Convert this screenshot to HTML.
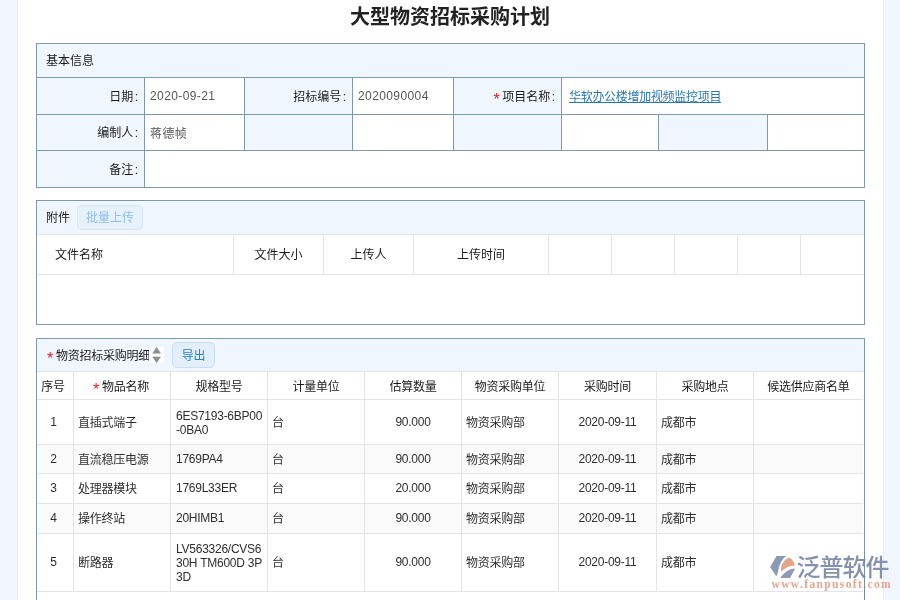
<!DOCTYPE html>
<html lang="zh-CN">
<head>
<meta charset="utf-8">
<title>大型物资招标采购计划</title>
<style>
*{box-sizing:border-box;margin:0;padding:0}
html,body{width:900px;height:600px;overflow:hidden;background:#fff}
body{position:relative;font-family:"Liberation Sans","Noto Sans CJK SC",sans-serif;font-size:12px;color:#2e2e2e;line-height:1}
.p3{letter-spacing:-0.25px}
.p3 .star{margin-right:0}
#root{position:absolute;left:0;top:0;width:900px;height:600px;overflow:hidden;will-change:transform}
.abs{position:absolute}
.side{position:absolute;top:0;height:600px;background:#f1f5fd}
.title{position:absolute;left:0;top:5px;width:900px;height:24px;line-height:24px;text-align:center;font-size:20px;font-weight:bold;color:#222}
.panel{position:absolute;left:36px;width:829px;border:1px solid #7e99a7;background:#fff}
.phead{position:absolute;left:0;top:0;width:827px;background:#f0f6fd}
.hl{position:absolute;background:#7e99a7;height:1px}
.vl{position:absolute;background:#7e99a7;width:1px}
.gl{position:absolute;background:#e4e4e4;height:1px}
.gv{position:absolute;background:#e4e4e4;width:1px}
.lab{position:absolute;background:#f0f6fd}
.t{position:absolute;white-space:nowrap}
.r{text-align:right;letter-spacing:0}
.c{text-align:center}
.cl{margin-left:1.5px}
.d{color:#1a1a1a}
.g{color:#555}
.star{color:#e02020;font-weight:400;font-size:16px;line-height:0;position:relative;top:4px;margin-right:-1px;font-family:"Liberation Sans",sans-serif}
.btn{position:absolute;border:1px solid #d7e7f6;background:#e7f1fc;border-radius:4px;text-align:center;white-space:nowrap}
.lnk{color:#2878b0;text-decoration:underline;letter-spacing:-0.3px}
</style>
</head>
<body>
<div id="root">
<div class="side" style="left:0;width:18px;border-right:1px solid #e9edf5"></div>
<div class="side" style="left:883px;width:17px;border-left:1px solid #e9edf5"></div>
<div class="title">大型物资招标采购计划</div>
<div class="panel" style="top:43px;height:145px">
  <div class="phead" style="height:33px"></div>
  <div class="t d" style="left:9px;top:1px;height:33px;line-height:33px">基本信息</div>
  <div class="lab" style="left:0px;top:34px;width:107px;height:36px"></div>
  <div class="lab" style="left:208px;top:34px;width:107px;height:36px"></div>
  <div class="lab" style="left:417px;top:34px;width:107px;height:36px"></div>
  <div class="lab" style="left:0px;top:71px;width:107px;height:35px"></div>
  <div class="lab" style="left:208px;top:71px;width:107px;height:35px"></div>
  <div class="lab" style="left:417px;top:71px;width:107px;height:35px"></div>
  <div class="lab" style="left:622px;top:71px;width:108px;height:35px"></div>
  <div class="lab" style="left:0px;top:107px;width:107px;height:36px"></div>
  <div class="t r d" style="left:0px;top:35px;height:36px;line-height:36px;width:101px">日期<span class="cl">:</span></div>
  <div class="t r d" style="left:208px;top:35px;height:36px;line-height:36px;width:101px">招标编号<span class="cl">:</span></div>
  <div class="t r d" style="left:417px;top:35px;height:36px;line-height:36px;width:101px"><span class="star">*</span> 项目名称<span class="cl">:</span></div>
  <div class="t r d" style="left:0px;top:72px;height:35px;line-height:35px;width:101px">编制人<span class="cl">:</span></div>
  <div class="t r d" style="left:0px;top:108px;height:36px;line-height:36px;width:101px">备注<span class="cl">:</span></div>
  <div class="t g" style="left:113px;top:34px;height:36px;line-height:36px;letter-spacing:.4px">2020-09-21</div>
  <div class="t g" style="left:321px;top:34px;height:36px;line-height:36px;letter-spacing:.4px">2020090004</div>
  <div class="t " style="left:532px;top:35px;height:36px;line-height:36px"><span class="lnk">华软办公楼增加视频监控项目</span></div>
  <div class="t g" style="left:113px;top:73px;height:35px;line-height:35px;letter-spacing:.4px">蒋德帧</div>
  <div class="hl" style="left:0;top:33px;width:827px"></div>
  <div class="hl" style="left:0;top:70px;width:827px"></div>
  <div class="hl" style="left:0;top:106px;width:827px"></div>
  <div class="vl" style="left:107px;top:34px;height:109px"></div>
  <div class="vl" style="left:207px;top:34px;height:72px"></div>
  <div class="vl" style="left:315px;top:34px;height:72px"></div>
  <div class="vl" style="left:416px;top:34px;height:72px"></div>
  <div class="vl" style="left:524px;top:34px;height:72px"></div>
  <div class="vl" style="left:621px;top:71px;height:35px"></div>
  <div class="vl" style="left:730px;top:71px;height:35px"></div>
</div>
<div class="panel" style="top:200px;height:125px">
  <div class="phead" style="height:33px"></div>
  <div class="t d" style="left:9px;top:1px;height:33px;line-height:33px">附件</div>
  <div class="btn" style="left:40px;top:4px;width:66px;height:25px;line-height:24px;color:#8fc0e3">批量上传</div>
  <div class="gl" style="left:0;top:33px;width:827px"></div>
  <div class="gl" style="left:0;top:73px;width:827px"></div>
  <div class="gv" style="left:196px;top:34px;height:39px"></div>
  <div class="gv" style="left:286px;top:34px;height:39px"></div>
  <div class="gv" style="left:376px;top:34px;height:39px"></div>
  <div class="gv" style="left:511px;top:34px;height:39px"></div>
  <div class="gv" style="left:574px;top:34px;height:39px"></div>
  <div class="gv" style="left:637px;top:34px;height:39px"></div>
  <div class="gv" style="left:700px;top:34px;height:39px"></div>
  <div class="gv" style="left:763px;top:34px;height:39px"></div>
  <div class="t d" style="left:18px;top:35px;height:39px;line-height:39px">文件名称</div>
  <div class="t c d" style="left:197px;top:35px;height:39px;line-height:39px;width:89px">文件大小</div>
  <div class="t c d" style="left:287px;top:35px;height:39px;line-height:39px;width:89px">上传人</div>
  <div class="t c d" style="left:377px;top:35px;height:39px;line-height:39px;width:134px">上传时间</div>
</div>
<div class="panel p3" style="top:338px;height:300px">
  <div class="phead" style="height:32px"></div>
  <div class="t d" style="left:10px;top:1px;height:32px;line-height:32px"><span class="star">*</span> 物资招标采购明细</div>
  <div class="abs" style="left:112px;top:8px;width:15px;height:16px;background:#fbfcfe"></div>
  <svg class="abs" style="left:112px;top:8px" width="14" height="16" viewBox="0 0 14 16"><path d="M7.6 0.3 L11.4 6.2 H3.8 Z" fill="#8e8e8e" stroke="#8e8e8e" stroke-width="0.6" stroke-linejoin="round"/><path d="M7.6 15.7 L11.4 10 H3.8 Z" fill="#8e8e8e" stroke="#8e8e8e" stroke-width="0.6" stroke-linejoin="round"/></svg>
  <div class="btn" style="left:135px;top:3px;width:43px;height:26px;line-height:26px;color:#2585c6;border-color:#c8def1;background:#e2eefa;border-radius:5px">导出</div>
  <div class="abs" style="left:0;top:106px;width:826px;height:28px;background:#fafafa"></div>
  <div class="abs" style="left:0;top:165px;width:826px;height:29px;background:#fafafa"></div>
  <div class="gl" style="left:0;top:32px;width:827px"></div>
  <div class="gl" style="left:0;top:60px;width:826px"></div>
  <div class="gl" style="left:0;top:105px;width:826px"></div>
  <div class="gl" style="left:0;top:134px;width:826px"></div>
  <div class="gl" style="left:0;top:164px;width:826px"></div>
  <div class="gl" style="left:0;top:194px;width:826px"></div>
  <div class="gl" style="left:0;top:252px;width:826px"></div>
  <div class="gv" style="left:36px;top:33px;height:219px"></div>
  <div class="gv" style="left:133px;top:33px;height:219px"></div>
  <div class="gv" style="left:230px;top:33px;height:219px"></div>
  <div class="gv" style="left:327px;top:33px;height:219px"></div>
  <div class="gv" style="left:424px;top:33px;height:219px"></div>
  <div class="gv" style="left:521px;top:33px;height:219px"></div>
  <div class="gv" style="left:619px;top:33px;height:219px"></div>
  <div class="gv" style="left:716px;top:33px;height:219px"></div>
  <div class="t c d" style="left:-2px;top:35px;height:27px;line-height:27px;width:36px">序号</div>
  <div class="t c d" style="left:36px;top:35px;height:27px;line-height:27px;width:96px"><span class="star">*</span> 物品名称</div>
  <div class="t c d" style="left:134px;top:35px;height:27px;line-height:27px;width:96px">规格型号</div>
  <div class="t c d" style="left:231px;top:35px;height:27px;line-height:27px;width:96px">计量单位</div>
  <div class="t c d" style="left:328px;top:35px;height:27px;line-height:27px;width:96px">估算数量</div>
  <div class="t c d" style="left:425px;top:35px;height:27px;line-height:27px;width:96px">物资采购单位</div>
  <div class="t c d" style="left:522px;top:35px;height:27px;line-height:27px;width:97px">采购时间</div>
  <div class="t c d" style="left:620px;top:35px;height:27px;line-height:27px;width:96px">采购地点</div>
  <div class="t c d" style="left:717px;top:35px;height:27px;line-height:27px;width:109px">候选供应商名单</div>
  <div class="t c" style="left:-1px;top:61px;height:44px;line-height:44px;width:35px">1</div>
  <div class="t " style="left:41px;top:62px;height:44px;line-height:44px">直插式端子</div>
  <div class="t" style="left:139px;top:69.5px;line-height:14px">6ES7193-6BP00<br>-0BA0</div>
  <div class="t " style="left:235px;top:62px;height:44px;line-height:44px">台</div>
  <div class="t c" style="left:328px;top:61px;height:44px;line-height:44px;width:96px">90.000</div>
  <div class="t " style="left:429px;top:62px;height:44px;line-height:44px">物资采购部</div>
  <div class="t c" style="left:522px;top:61px;height:44px;line-height:44px;width:97px">2020-09-11</div>
  <div class="t " style="left:624px;top:62px;height:44px;line-height:44px">成都市</div>
  <div class="t c" style="left:-1px;top:106px;height:28px;line-height:28px;width:35px">2</div>
  <div class="t " style="left:41px;top:107px;height:28px;line-height:28px">直流稳压电源</div>
  <div class="t " style="left:139px;top:106px;height:28px;line-height:28px">1769PA4</div>
  <div class="t " style="left:235px;top:107px;height:28px;line-height:28px">台</div>
  <div class="t c" style="left:328px;top:106px;height:28px;line-height:28px;width:96px">90.000</div>
  <div class="t " style="left:429px;top:107px;height:28px;line-height:28px">物资采购部</div>
  <div class="t c" style="left:522px;top:106px;height:28px;line-height:28px;width:97px">2020-09-11</div>
  <div class="t " style="left:624px;top:107px;height:28px;line-height:28px">成都市</div>
  <div class="t c" style="left:-1px;top:135px;height:29px;line-height:29px;width:35px">3</div>
  <div class="t " style="left:41px;top:136px;height:29px;line-height:29px">处理器模块</div>
  <div class="t " style="left:139px;top:135px;height:29px;line-height:29px">1769L33ER</div>
  <div class="t " style="left:235px;top:136px;height:29px;line-height:29px">台</div>
  <div class="t c" style="left:328px;top:135px;height:29px;line-height:29px;width:96px">20.000</div>
  <div class="t " style="left:429px;top:136px;height:29px;line-height:29px">物资采购部</div>
  <div class="t c" style="left:522px;top:135px;height:29px;line-height:29px;width:97px">2020-09-11</div>
  <div class="t " style="left:624px;top:136px;height:29px;line-height:29px">成都市</div>
  <div class="t c" style="left:-1px;top:165px;height:29px;line-height:29px;width:35px">4</div>
  <div class="t " style="left:41px;top:166px;height:29px;line-height:29px">操作终站</div>
  <div class="t " style="left:139px;top:165px;height:29px;line-height:29px">20HIMB1</div>
  <div class="t " style="left:235px;top:166px;height:29px;line-height:29px">台</div>
  <div class="t c" style="left:328px;top:165px;height:29px;line-height:29px;width:96px">90.000</div>
  <div class="t " style="left:429px;top:166px;height:29px;line-height:29px">物资采购部</div>
  <div class="t c" style="left:522px;top:165px;height:29px;line-height:29px;width:97px">2020-09-11</div>
  <div class="t " style="left:624px;top:166px;height:29px;line-height:29px">成都市</div>
  <div class="t c" style="left:-1px;top:195px;height:57px;line-height:57px;width:35px">5</div>
  <div class="t " style="left:41px;top:196px;height:57px;line-height:57px">断路器</div>
  <div class="t" style="left:139px;top:203.0px;line-height:14px">LV563326/CVS6<br>30H TM600D 3P<br>3D</div>
  <div class="t " style="left:235px;top:196px;height:57px;line-height:57px">台</div>
  <div class="t c" style="left:328px;top:195px;height:57px;line-height:57px;width:96px">90.000</div>
  <div class="t " style="left:429px;top:196px;height:57px;line-height:57px">物资采购部</div>
  <div class="t c" style="left:522px;top:195px;height:57px;line-height:57px;width:97px">2020-09-11</div>
  <div class="t " style="left:624px;top:196px;height:57px;line-height:57px">成都市</div>
</div>
<div class="abs" style="left:765px;top:550px;width:135px;height:45px">
  <svg class="abs" style="left:0;top:0" width="40" height="32" viewBox="0 0 40 32">
    <path d="M11.5 6.1 L21.3 6.1 C17 9 14.6 14 13.6 19 C13 22 12.2 25 11.2 26.3 L5.1 17.1 Z" fill="#8d99b5"/>
    <path d="M16 21.9 C15.4 16 18 9.5 24.5 7.5 C27.5 9.5 29.5 12.5 29.9 15.5 C24 15.6 19 18.6 16 21.9 Z" fill="#e2a48a"/>
    <path d="M15.2 28 L25.1 28 L30.1 18.4 C24 18.6 19 22.5 15.2 28 Z" fill="#8d99b5"/>
  </svg>
  <div class="t" style="left:31.5px;top:3px;font-size:24px;line-height:26px;color:#8490ad;letter-spacing:-1px;font-family:'Noto Sans CJK SC',sans-serif;font-weight:500">泛普软件</div>
  <div class="t" style="left:6.5px;top:28px;font-size:11.5px;line-height:12px;color:#e2a58f;font-family:'Liberation Serif',serif;font-weight:bold;letter-spacing:1.38px">www.fanpusoft.com</div>
</div>
<div class="abs" style="left:864px;top:552px;width:1px;height:48px;background:#6f8e9d;opacity:.75"></div>
</div>
</body>
</html>
